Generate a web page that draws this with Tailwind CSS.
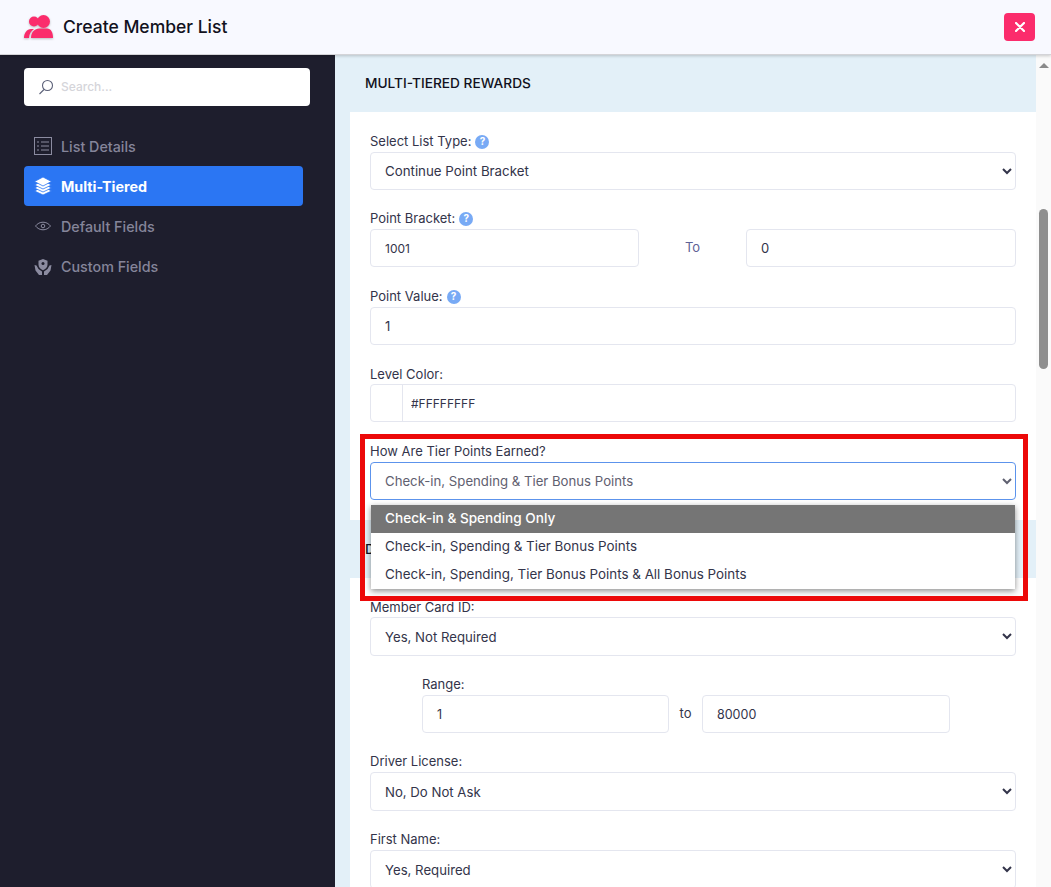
<!DOCTYPE html>
<html lang="en">
<head>
    <meta charset="UTF-8">
    <meta name="viewport" content="width=device-width, initial-scale=1.0">
    <title>Create Member List</title>
    <script src="https://cdn.jsdelivr.net/npm/@tailwindcss/browser@4"></script>
</head>
<body class="h-[887px] w-[1051px] overflow-hidden bg-white font-['Inter','Liberation_Sans',sans-serif]">
    <!-- header -->
    <header class="relative z-10 flex h-[55px] items-center justify-between border-b border-[#d4d4d8] bg-[#f8f9ff] pl-[24px] pr-[16px] shadow-[0_1px_3px_rgba(0,0,0,0.2)]">
        <div class="flex items-center gap-[9px]">
            <svg class="h-[24px] w-[30px] drop-shadow-[0_1px_1px_rgba(0,0,0,0.25)]" viewBox="0 0 30 24" fill="#fb2c6c">
                <circle cx="10" cy="6.500" r="5"/>
                <circle cx="19.500" cy="6.500" r="6.500"/>
                <path d="M0 23c0-5 3-9 7-9h3c-3 2-5 5-5 9z"/>
                <path d="M7 23c0-6 4-9.500 8-9.500h8c4 0 6 4 6 9.500z"/>
            </svg>
            <h1 class="text-[17.500px] font-medium text-[#111120]">Create Member List</h1>
        </div>
        <button class="flex h-[28px] w-[31px] items-center justify-center rounded-[4px] bg-[#fb2c6c] text-white">
            <svg class="h-[10px] w-[10px]" viewBox="0 0 10 10" stroke="currentColor" stroke-width="2.2" stroke-linecap="round"><path d="M1 1l8 8M9 1l-8 8"/></svg>
        </button>
    </header>

    <div class="flex h-[832px]">
        <!-- sidebar -->
        <aside class="w-[335px] shrink-0 bg-[#1e1e2d] pl-[24px] pt-[13px]">
            <div class="flex h-[38px] w-[286px] items-center gap-[7px] rounded-[4px] bg-white pl-[14px]">
                <svg class="h-[16px] w-[16px]" viewBox="0 0 16 16" fill="none" stroke="#5b6078" stroke-width="1.100"><circle cx="9.500" cy="6.500" r="5"/><path d="M6 10.500L1.500 15"/></svg>
                <span class="text-[12px] font-medium text-[#d5d5da]">Search...</span>
            </div>
            <nav class="mt-[20px] w-[279px] text-[14.300px] font-medium text-[#85859a]">
                <a class="flex h-[40px] items-center gap-[9px] pl-[10px]">
                    <svg class="h-[18px] w-[18px]" viewBox="0 0 18 18" fill="none" stroke="#8b8ba0" stroke-width="1"><rect x="0.500" y="0.500" width="17" height="17"/><path d="M7 5h8M7 9h8M7 13h8M3 5h2M3 9h2M3 13h2"/></svg>
                    <span class="pt-[1px]">List Details</span>
                </a>
                <a class="flex h-[40px] items-center gap-[9px] rounded-[4px] bg-[#2b76f3] pl-[10px] font-bold text-white">
                    <svg class="h-[18px] w-[18px]" viewBox="0 0 18 18" fill="white" stroke="#2b76f3" stroke-width="0.800"><path d="M9 9.500L.5 14 9 18l8.500-4z"/><path d="M9 6.500L.5 11 9 15l8.500-4z"/><path d="M9 3.500L.5 8 9 12l8.500-4z"/><path d="M9 0L.5 4.500 9 9l8.500-4.500z"/></svg>
                    <span class="pt-[1px]">Multi-Tiered</span>
                </a>
                <a class="flex h-[40px] items-center gap-[9px] pl-[10px]">
                    <svg class="h-[18px] w-[18px]" viewBox="0 0 18 18" fill="none" stroke="#8b8ba0" stroke-width="1"><path d="M1.500 9c2-2.500 4.500-3.800 7.500-3.800S14.500 6.500 16.500 9c-2 2.500-4.500 3.800-7.500 3.800S3.500 11.500 1.500 9z"/><circle cx="9" cy="9" r="1.800"/></svg>
                    <span class="pt-[1px]">Default Fields</span>
                </a>
                <a class="flex h-[41px] items-center gap-[9px] pl-[10px]">
                    <svg class="h-[18px] w-[18px]" viewBox="0 0 18 18" fill="#8b8ba0"><path d="M9 1l4.500 1.800v3.700c0 2.800-1.800 4.700-4.500 5.700-2.700-1-4.500-2.900-4.500-5.700V2.800z"/><circle cx="9" cy="5.500" r="1.500" fill="#1e1e2d"/><path d="M0.500 7l1 5.500L5 17h3v-3.500L4.500 11 2.500 7.500zM17.500 7l-1 5.500L13 17h-3v-3.500l3.500-2.500 2-3.500z"/></svg>
                    <span class="pt-[1px]">Custom Fields</span>
                </a>
            </nav>
        </aside>

        <!-- form -->
        <main class="relative w-[716px] overflow-hidden">
            <div class="w-[701px] bg-[#e3f0f8] pl-[15px] text-[13px] text-[#33344a]">
                <div class="-ml-[15px] flex h-[57px] items-start pl-[30px] pt-[18px] text-[13.700px] font-medium text-[#111120]">MULTI-TIERED REWARDS</div>

                <section class="bg-white px-[20px] pb-[20px] pt-[17px]">
                    <div class="h-[77px]">
                        <label class="flex h-[23px] items-center gap-[4px] pt-[2px]">Select List Type:
                            <span class="flex h-[14px] w-[14px] items-center justify-center rounded-full bg-[#78aaf5] text-[10px] font-bold text-white">?</span>
                        </label>
                        <select class="h-[38px] w-full rounded-[4px] border border-[#e4e6ef] bg-white pl-[10px] text-[13.300px]"><option>Continue Point Bracket</option></select>
                    </div>
                    <div class="h-[78px]">
                        <label class="flex h-[23px] items-center gap-[4px] pt-[2px]">Point Bracket:
                            <span class="flex h-[14px] w-[14px] items-center justify-center rounded-full bg-[#78aaf5] text-[10px] font-bold text-white">?</span>
                        </label>
                        <div class="flex items-center">
                            <input class="h-[38px] w-[269px] rounded-[4px] border border-[#e4e6ef] pl-[14px] text-[12px]" value="1001">
                            <span class="w-[107px] text-center text-[#5e6296]">To</span>
                            <input class="h-[38px] w-[270px] rounded-[4px] border border-[#e4e6ef] pl-[14px] text-[13px]" value="0">
                        </div>
                    </div>
                    <div class="h-[77px]">
                        <label class="flex h-[23px] items-center gap-[4px] pt-[2px]">Point Value:
                            <span class="flex h-[14px] w-[14px] items-center justify-center rounded-full bg-[#78aaf5] text-[10px] font-bold text-white">?</span>
                        </label>
                        <input class="h-[38px] w-full rounded-[4px] border border-[#e4e6ef] pl-[14px] text-[13px]" value="1">
                    </div>
                    <div class="h-[78px]">
                        <label class="flex h-[23px] items-center pt-[4px]">Level Color:</label>
                        <div class="flex h-[38px] items-center rounded-[4px] border border-[#e4e6ef]">
                            <span class="h-full w-[32px] border-r border-[#e4e6ef]"></span>
                            <input class="h-full flex-1 pl-[8px] text-[12px]" value="#FFFFFFFF">
                        </div>
                    </div>
                    <div class="relative">
                        <label class="flex h-[23px] items-center pt-[2px]">How Are Tier Points Earned?</label>
                        <select class="h-[38px] w-full rounded-[4px] border border-[#5c93ec] bg-white pl-[10px] text-[13.200px] text-[#5f6070]"><option>Check-in, Spending &amp; Tier Bonus Points</option></select>
                        <!-- open dropdown -->
                        <ul class="absolute left-[1px] top-[66px] z-10 w-[644px] bg-white text-[13.400px] shadow-[0_2px_6px_rgba(0,0,0,0.45)]">
                            <li class="flex h-[28px] items-center bg-[#757575] pb-[1px] pl-[14px] text-[13.600px] font-medium text-white">Check-in &amp; Spending Only</li>
                            <li class="flex h-[28px] items-center pb-[1px] pl-[14px]">Check-in, Spending &amp; Tier Bonus Points</li>
                            <li class="flex h-[28px] items-center pb-[1px] pl-[14px]">Check-in, Spending, Tier Bonus Points &amp; All Bonus Points</li>
                        </ul>
                        <!-- red callout -->
                        <div class="absolute -left-[10px] -right-[12px] -top-[5px] z-20 h-[167px] border-[5px] border-[#ec0909]"></div>
                    </div>
                </section>

                <div class="h-[58px] pl-[15px] pt-[19px] text-[13.700px] font-medium text-[#111120]">DEFAULT FIELDS</div>

                <section class="bg-white px-[20px] pt-[16px]">
                    <div class="h-[78px]">
                        <label class="flex h-[23px] items-center pt-[4px]">Member Card ID:</label>
                        <select class="h-[39px] w-full rounded-[4px] border border-[#e4e6ef] bg-white pl-[10px] text-[13.200px]"><option>Yes, Not Required</option></select>
                    </div>
                    <div class="h-[77px] pl-[52px]">
                        <label class="flex h-[23px] items-center pt-[3px]">Range:</label>
                        <div class="flex items-center">
                            <input class="h-[38px] w-[247px] rounded-[4px] border border-[#e4e6ef] pl-[14px] text-[12.500px]" value="1">
                            <span class="w-[33px] text-center">to</span>
                            <input class="h-[38px] w-[248px] rounded-[4px] border border-[#e4e6ef] pl-[14px] text-[12.500px]" value="80000">
                        </div>
                    </div>
                    <div class="h-[78px]">
                        <label class="flex h-[23px] items-center pt-[3px]">Driver License:</label>
                        <select class="h-[39px] w-full rounded-[4px] border border-[#e4e6ef] bg-white pl-[10px] text-[13.200px]"><option>No, Do Not Ask</option></select>
                    </div>
                    <div class="h-[78px]">
                        <label class="flex h-[23px] items-center pt-[2px]">First Name:</label>
                        <select class="h-[39px] w-full rounded-[4px] border border-[#e4e6ef] bg-white pl-[10px] text-[13.200px]"><option>Yes, Required</option></select>
                    </div>
                </section>
            </div>

            <!-- scrollbar -->
            <div class="absolute bottom-0 right-0 top-0 w-[15px] bg-[#fafafa]">
                <div class="mx-auto mt-[8px] h-0 w-0 border-x-[5px] border-b-[5px] border-x-transparent border-b-[#8a8a8a]"></div>
                <div class="mx-auto mt-[141px] h-[160px] w-[9px] rounded-full bg-[#8f8f8f]"></div>
            </div>
        </main>
    </div>
</body>
</html>
